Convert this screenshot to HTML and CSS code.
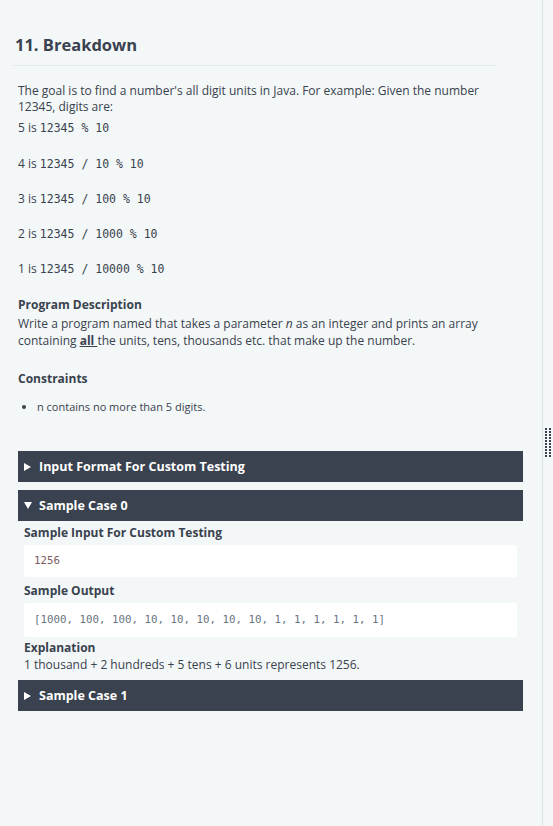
FILE: index.html
```html
<!DOCTYPE html>
<html lang="en">
<head>
    <meta charset="UTF-8">
    <meta name="viewport" content="width=device-width, initial-scale=1.0">
    <title>11. Breakdown</title>
    <link rel="stylesheet" href="styles.css">
</head>
<body>

<div class="page">
    <div class="challenge">
        <h1 class="title">11. Breakdown</h1>

        <div class="statement">
            <p class="intro">The goal is to find a number's all digit units in Java. For example: Given the number 12345, digits are:</p>
            <p class="digit">5 is <code>12345 % 10</code></p>
            <p class="digit">4 is <code>12345 / 10 % 10</code></p>
            <p class="digit">3 is <code>12345 / 100 % 10</code></p>
            <p class="digit">2 is <code>12345 / 1000 % 10</code></p>
            <p class="digit">1 is <code>12345 / 10000 % 10</code></p>

            <!-- Descripcion -->
            <h4 class="section-title">Program Description</h4>
            <p class="desc">Write a program named that takes a parameter <em>n</em> as an integer and prints an array containing <strong class="all">all&nbsp;</strong>the units, tens, thousands etc. that make up the number.</p>

            <h4 class="section-title constraints-title">Constraints</h4>
            <ul class="constraints">
                <li>n contains no more than 5 digits.</li>
            </ul>
        </div>

        <!-- Casos de prueba -->
        <div class="accordion">
            <div class="bar"><span class="arrow"></span>Input Format For Custom Testing</div>

            <div class="bar"><span class="arrow down"></span>Sample Case 0</div>
            <div class="case-body">
                <h5 class="case-label">Sample Input For Custom Testing</h5>
                <pre class="box">1256</pre>
                <h5 class="case-label">Sample Output</h5>
                <pre class="box out">[1000, 100, 100, 10, 10, 10, 10, 10, 1, 1, 1, 1, 1, 1]</pre>
                <h5 class="case-label tight">Explanation</h5>
                <p class="explain">1 thousand + 2 hundreds + 5 tens + 6 units represents 1256.</p>
            </div>

            <div class="bar"><span class="arrow"></span>Sample Case 1</div>
        </div>
    </div>

    <div class="splitter">
        <div class="handle"></div>
    </div>
</div>

</body>
</html>
```

FILE: styles.css
```css
html, body {
    margin: 0;
    padding: 0;
    height: 100%;
}
body {
    font-family: "Open Sans", sans-serif;
    background-color: #f3f7f7;
    color: #39424e;
    font-size: 12px;
}
.page {
    display: flex;
    height: 826px;
}
.challenge {
    width: 543px;
    box-sizing: border-box;
    border-right: 1px solid #dde2e5;
    padding: 0 20px 0 18px;
}
.title {
    font-size: 16.5px;
    font-weight: 700;
    margin: 33px 25px 0 -5px;
    padding: 0 0 8px 2px;
    line-height: 24px;
    border-bottom: 1px solid #e3e8eb;
}
.statement p {
    margin: 0;
    line-height: 16px;
}
.intro {
    margin-top: 17px !important;
    padding-right: 20px;
}
.digit {
    margin-top: 19px !important;
    height: 16px;
}
.intro + .digit {
    margin-top: 5px !important;
}
.intro + .digit + .digit {
    margin-top: 20px !important;
}
code {
    font-family: "DejaVu Sans Mono", monospace;
    font-size: 11.5px;
    line-height: 16px;
    color: #39424e;
}
.section-title {
    font-size: 12px;
    font-weight: 700;
    margin: 19px 0 2px 0;
    line-height: 17px;
}
.statement .desc {
    line-height: 17px;
}
.all {
    text-decoration: underline;
}
.constraints-title {
    margin-top: 21px;
}
.constraints {
    margin: 12px 0 0 0;
    padding-left: 19px;
    font-size: 11px;
}
.constraints li {
    line-height: 16px;
}

/* Acordeon */
.accordion {
    margin-top: 36px;
    width: 505px;
}
.bar {
    background-color: #39424e;
    color: #fff;
    font-weight: 700;
    font-size: 12.5px;
    height: 31px;
    line-height: 31px;
    padding-left: 6px;
    margin-bottom: 8px;
}
.arrow {
    display: inline-block;
    width: 0;
    height: 0;
    border-left: 7px solid #fff;
    border-top: 4px solid transparent;
    border-bottom: 4px solid transparent;
    margin-right: 8px;
    vertical-align: 0;
}
.arrow.down {
    border-top: 7px solid #fff;
    border-left: 4px solid transparent;
    border-right: 4px solid transparent;
    border-bottom: 0;
    margin-right: 7px;
    vertical-align: 1px;
}
.case-body {
    padding: 0 6px 0 6px;
    margin-top: -8px;
    margin-bottom: 7px;
}
.case-label {
    font-size: 12px;
    font-weight: 700;
    margin: 0;
    line-height: 17px;
    padding-top: 3px;
}
.case-label.tight {
    padding-top: 0;
}
.box {
    background-color: #fff;
    border-radius: 3px;
    margin: 4px 0 2px 0;
    padding: 0 10px;
    height: 32px;
    line-height: 32px;
    font-family: "DejaVu Sans Mono", monospace;
    font-size: 10.8px;
    color: #7a5c60;
}
.box.out {
    height: 34px;
    line-height: 34px;
    color: #6b7480;
}
.explain {
    margin: 0;
    line-height: 17px;
}

/* Separador */
.splitter {
    flex: 1;
    display: flex;
    justify-content: center;
}
.handle {
    margin-top: 428px;
    width: 6px;
    height: 30px;
    background-image: linear-gradient(90deg, #39424e 2px, transparent 2px);
    background-size: 4px 3px;
    -webkit-mask: linear-gradient(#000 2px, transparent 2px) 0 0 / 6px 3px;
}
```
